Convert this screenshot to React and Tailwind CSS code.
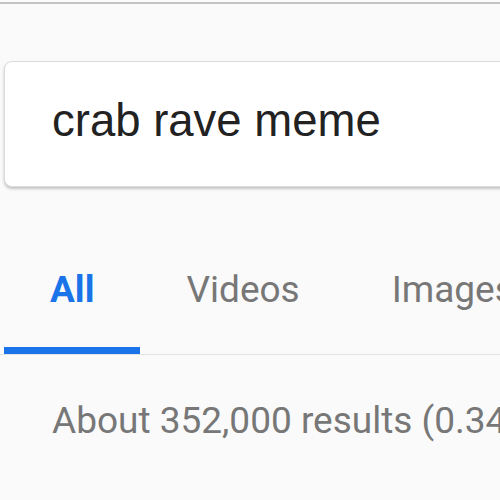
import React from 'react';

const tabs = ['All', 'Videos', 'Images'];

const App = () => {
  return (
    <div className="w-[500px] h-[500px] overflow-hidden bg-[#fafafa] pt-[2px]">
      <div className="border-t-2 border-[#c4c4c4]" />
      {/* search box */}
      <div className="mt-[57px] ml-[4px] w-[620px] h-[126px] bg-white border border-[#dcdcdc] rounded-[8px] shadow-[0_2px_3px_rgba(0,0,0,0.22)] pl-[47px] pt-[36px]">
        <div className="text-[45.5px] leading-none text-[#222] font-['Liberation_Sans',Arial,sans-serif] whitespace-nowrap">
          crab rave meme
        </div>
      </div>
      {/* tabs */}
      <div className="mt-[84px] flex border-b border-[#e3e3e3] pl-[4px] font-['Roboto',sans-serif] whitespace-nowrap">
        {tabs.map((t, i) => (
          <div key={t} className="flex flex-col items-center">
            <div
              className={
                i === 0
                  ? 'px-[46px] text-[37px] leading-none h-[37px] font-bold text-[#1a73e8]'
                  : 'px-[46px] text-[37px] leading-none h-[37px] text-[#777]'
              }
            >
              {t}
            </div>
            <div className={i === 0 ? 'mt-[39px] h-[7px] w-full bg-[#1a73e8]' : 'mt-[39px] h-[7px] w-full'} />
          </div>
        ))}
      </div>
      {/* results count */}
      <div className="mt-[47px] pl-[52px] text-[37px] leading-none text-[#777] font-['Roboto',sans-serif] whitespace-nowrap">
        About 352,000 results (0.34 seconds)
      </div>
    </div>
  );
};

export default App;
